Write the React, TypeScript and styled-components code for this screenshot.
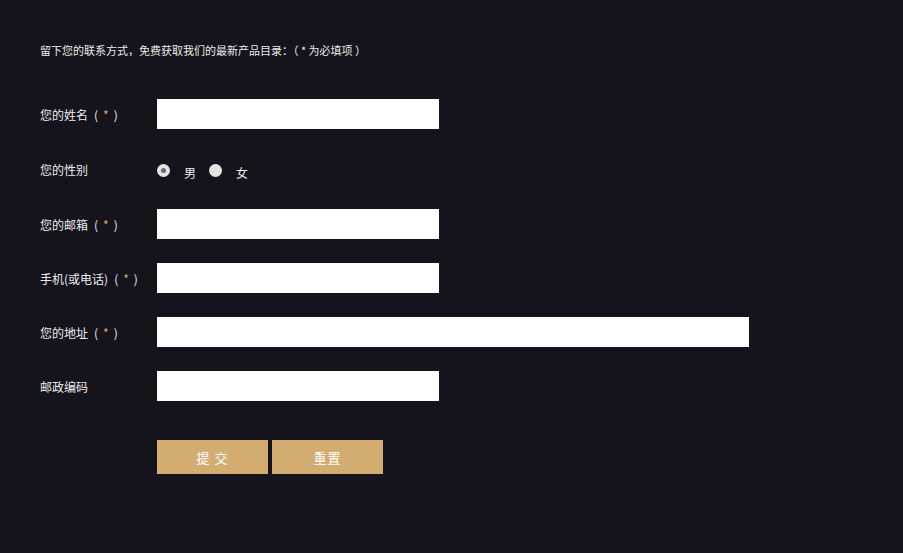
import React from "react";
import styled, { createGlobalStyle } from "styled-components";

const Global = createGlobalStyle`
  html, body { margin: 0; padding: 0; background: #15131b; }
  body { font-family: "Microsoft YaHei", "Noto Sans CJK SC", "Liberation Sans", sans-serif; }
  * { box-sizing: border-box; }
`;

const Page = styled.div`
  width: 903px;
  height: 553px;
  background: #15131b;
  padding: 42px 0 0 40px;
  color: #ececec;
`;

const Intro = styled.p`
  margin: 0 0 41px 0;
  font-size: 11px;
  line-height: 16px;
  color: #ececec;
`;

const Form = styled.form`
  display: flex;
  flex-direction: column;
  gap: 24px;
`;

const Row = styled.div<{ $tall?: boolean }>`
  display: flex;
  align-items: center;
  height: ${(p) => (p.$tall ? "32px" : "30px")};
`;

const Label = styled.label`
  width: 117px;
  font-size: 12px;
  color: #ececec;
  white-space: nowrap;
`;

const Star = styled.span`
  color: #d4ad74;
  padding: 0 5px;
`;

const Paren = styled.span`
  padding-left: 6px;
`;

const Input = styled.input<{ $wide?: boolean }>`
  width: ${(p) => (p.$wide ? "592px" : "282px")};
  height: 30px;
  border: none;
  background: #ffffff;
  margin: 0;
  padding: 0 6px;
  outline: none;
`;

const Radios = styled.div`
  display: flex;
  align-items: center;
  padding-top: 2px;
`;

const Radio = styled.span<{ $on?: boolean }>`
  width: 13px;
  height: 13px;
  border-radius: 50%;
  background: #e4e4e4;
  display: inline-flex;
  align-items: center;
  justify-content: center;
  margin-right: 14px;
  margin-left: ${(p) => (p.$on ? "0" : "13px")};
  &::after {
    content: "";
    width: 5px;
    height: 5px;
    border-radius: 50%;
    background: ${(p) => (p.$on ? "#6a6a6a" : "transparent")};
  }
`;

const RadioText = styled.span`
  font-size: 12px;
  color: #ececec;
  padding-top: 5px;
`;

const Buttons = styled.div`
  display: flex;
  gap: 4px;
  padding-left: 117px;
  margin-top: 15px;
`;

const Button = styled.button`
  width: 111px;
  height: 34px;
  border: none;
  background: #d3ac72;
  color: #ffffff;
  font-family: inherit;
  font-size: 13px;
  letter-spacing: 1px;
  cursor: pointer;
  padding: 0;
`;

const Req = () => (
  <>
    <Paren>(</Paren>
    <Star>*</Star>)
  </>
);

export default function App() {
  return (
    <>
      <Global />
      <Page>
        <Intro>留下您的联系方式，免费获取我们的最新产品目录：（ * 为必填项 ）</Intro>
        <Form onSubmit={(e) => e.preventDefault()}>
          <Row>
            <Label>您的姓名<Req /></Label>
            <Input />
          </Row>
          <Row $tall>
            <Label>您的性别</Label>
            <Radios>
              <Radio $on />
              <RadioText>男</RadioText>
              <Radio />
              <RadioText>女</RadioText>
            </Radios>
          </Row>
          <Row>
            <Label>您的邮箱<Req /></Label>
            <Input />
          </Row>
          <Row>
            <Label>手机(或电话)<Req /></Label>
            <Input />
          </Row>
          <Row>
            <Label>您的地址<Req /></Label>
            <Input $wide />
          </Row>
          <Row>
            <Label>邮政编码</Label>
            <Input />
          </Row>
          <Buttons>
            <Button type="submit">提 交</Button>
            <Button type="reset">重置</Button>
          </Buttons>
        </Form>
      </Page>
    </>
  );
}
